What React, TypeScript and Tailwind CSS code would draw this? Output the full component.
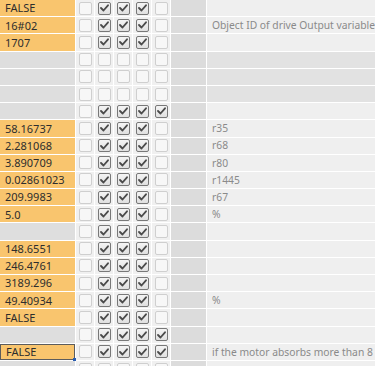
import React from 'react'

type Row = {
  v?: string
  c: number[]
  d?: string
  dim?: boolean
  selected?: boolean
}

const on3 = [0, 1, 1, 1, 0]
const on4 = [0, 1, 1, 1, 1]
const off = [0, 0, 0, 0, 0]

const rows: Row[] = [
  { v: 'FALSE', c: on3 },
  { v: '16#02', c: on3, d: 'Object ID of drive Output variable' },
  { v: '1707', c: on3 },
  { c: off, dim: true },
  { c: off, dim: true },
  { c: off, dim: true },
  { c: on4 },
  { v: '58.16737', c: on3, d: 'r35' },
  { v: '2.281068', c: on3, d: 'r68' },
  { v: '3.890709', c: on3, d: 'r80' },
  { v: '0.02861023', c: on3, d: 'r1445' },
  { v: '209.9983', c: on3, d: 'r67' },
  { v: '5.0', c: on3, d: '%' },
  { c: on3 },
  { v: '148.6551', c: on3 },
  { v: '246.4761', c: on3 },
  { v: '3189.296', c: on3 },
  { v: '49.40934', c: on3, d: '%' },
  { v: 'FALSE', c: on3 },
  { c: on4 },
  { v: 'FALSE', c: on4, d: 'if the motor absorbs more than 8', selected: true },
  { c: off },
]

function Box({ checked }: { checked: boolean }) {
  if (!checked) {
    return <div className="h-[13px] w-[13px] rounded-[2px] border border-[#cfcfcf] bg-[#f7f7f7]" />
  }
  return (
    <div className="flex h-[13px] w-[13px] items-center justify-center rounded-[2px] border border-[#787878] bg-gradient-to-b from-[#f4f4f4] to-[#e0e0e0]">
      <svg width="9" height="8" viewBox="0 0 9 8">
        <path d="M1 4 L3.5 6.5 L8 1.3" fill="none" stroke="#4a4a4a" strokeWidth="1.8" strokeLinecap="round" strokeLinejoin="round" />
      </svg>
    </div>
  )
}

export default function App() {
  return (
    <div className="h-[366px] w-[375px] overflow-hidden bg-white font-['Noto_Sans',sans-serif] text-[11px]">
      <div className="flex flex-col gap-px">
        {rows.map((r, i) => (
          <div key={i} className="flex h-[16.2px] shrink-0 gap-px">
            {/* value */}
            <div
              className={`relative flex w-[75px] shrink-0 items-center pt-px pl-[5px] text-[#2d2d2d] ${
                r.v ? 'bg-[#f9c56e]' : 'bg-[#dedede]'
              } ${r.selected ? 'border border-[#5c5c5c] pl-[4px]' : ''}`}
            >
              {r.v}
              {r.selected && <div className="absolute -right-[2px] -bottom-[2px] h-[3px] w-[3px] bg-[#2a5db0]" />}
            </div>

            {/* checkboxes */}
            {r.c.map((c, j) => (
              <div key={j} className="flex w-[18px] shrink-0 items-center justify-center bg-[#f0f0f0]">
                <Box checked={c === 1} />
              </div>
            ))}

            {/* spacer column */}
            <div className="w-[35px] shrink-0 bg-[#dcdcdc]" />

            {/* description */}
            <div
              className={`flex min-w-0 flex-1 items-center overflow-hidden whitespace-nowrap pt-px pl-[5px] text-[10.3px] text-[#8a8a8a] ${
                r.dim ? 'bg-[#e2e2e2]' : 'bg-[#efefef]'
              }`}
            >
              {r.d}
            </div>
          </div>
        ))}
      </div>
    </div>
  )
}
